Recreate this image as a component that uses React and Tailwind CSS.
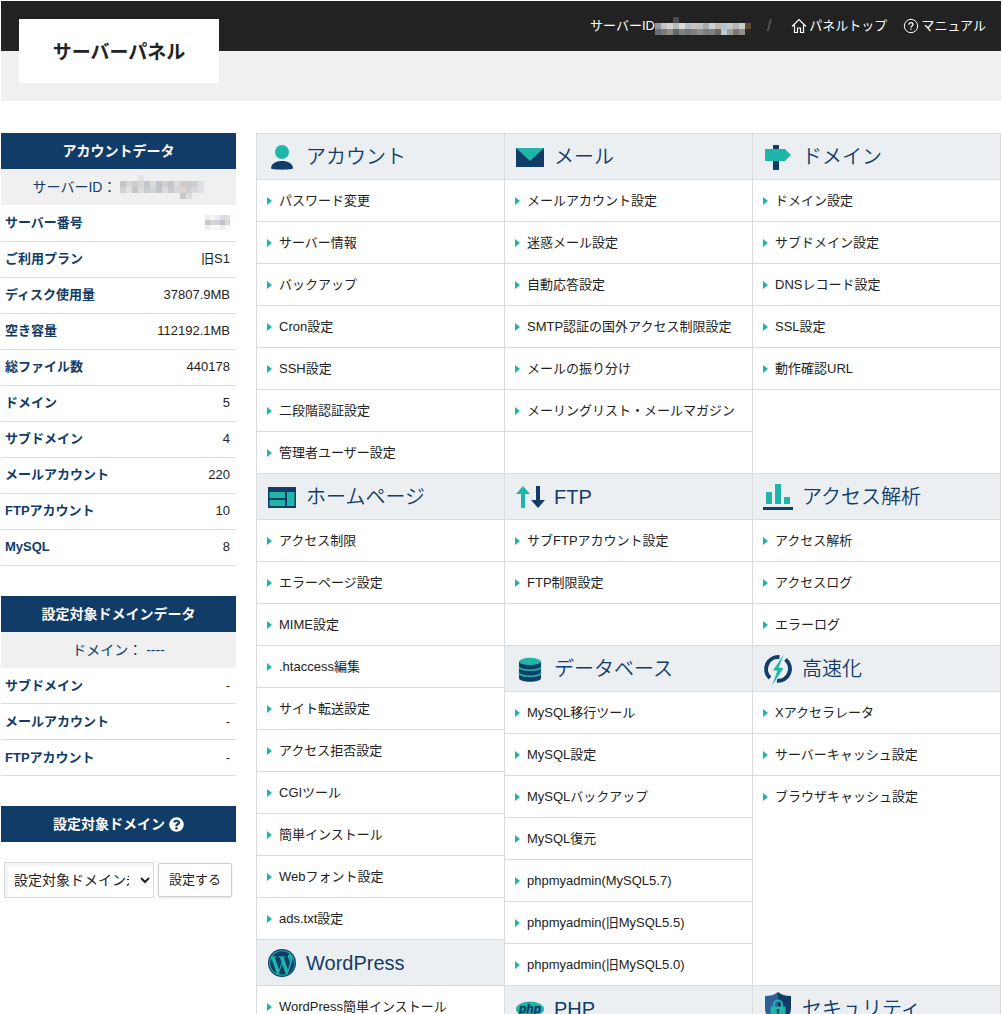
import { FaQuestionCircle } from "react-icons/fa";

const accountData = [
  ["サーバー番号", null],
  ["ご利用プラン", "旧S1"],
  ["ディスク使用量", "37807.9MB"],
  ["空き容量", "112192.1MB"],
  ["総ファイル数", "440178"],
  ["ドメイン", "5"],
  ["サブドメイン", "4"],
  ["メールアカウント", "220"],
  ["FTPアカウント", "10"],
  ["MySQL", "8"],
];

const domainData = [
  ["サブドメイン", "-"],
  ["メールアカウント", "-"],
  ["FTPアカウント", "-"],
];

const NAVY = "#113c68";
const TEAL = "#1fb5a9";

function Icon({ children }) {
  return (
    <svg className="h-7 w-7 shrink-0 overflow-visible" viewBox="0 0 28 28" aria-hidden="true">
      {children}
    </svg>
  );
}

const icons = {
  account: (
    <Icon>
      <circle cx="14" cy="9" r="7" fill={TEAL} />
      <path d="M3 25.500C3 20.500 8 18 14 18s11 2.500 11 7.500c-3 1.500-19 1.500-22 0z" fill={NAVY} />
    </Icon>
  ),
  mail: (
    <Icon>
      <path d="M0 5h28v19H0z" fill={NAVY} />
      <path d="M0 5h28L14 18z" fill={TEAL} />
    </Icon>
  ),
  domain: (
    <Icon>
      <path d="M9 2h6v25H9z" fill={NAVY} />
      <path d="M1 6h20l6 6-6 6H1z" fill={TEAL} />
    </Icon>
  ),
  homepage: (
    <Icon>
      <path d="M0 4h28v21H0z" fill={NAVY} />
      <path d="M1.500 9H17v6H1.500zM1.500 17H17v6H1.500zM19 9h7.500v14H19z" fill={TEAL} />
    </Icon>
  ),
  ftp: (
    <Icon>
      <path d="M7 3l7 8H9v14H5V11H0z" fill={TEAL} />
      <path d="M22 25l-7-8h5V3h4v14h5z" fill={NAVY} />
    </Icon>
  ),
  analysis: (
    <Icon>
      <path d="M2 9h6v12H2zM11 1h6v20h-6zM20 14h6v7h-6z" fill={TEAL} />
      <path d="M-1 24h30v3H-1z" fill={NAVY} />
    </Icon>
  ),
  database: (
    <Icon>
      <path d="M3 7v16c0 5 22 5 22 0V7z" fill={NAVY} />
      <path d="M3 11.500c0 5 22 5 22 0M3 17.500c0 5 22 5 22 0" fill="none" stroke={TEAL} strokeWidth="1.500" />
      <ellipse cx="14" cy="6.500" rx="11" ry="3.700" fill={TEAL} />
    </Icon>
  ),
  speed: (
    <Icon>
      <path d="M15.500 2.200A12 12 0 0 0 6 23" fill="none" stroke={NAVY} strokeWidth="4" />
      <path d="M21.500 4.500A12 12 0 0 1 13 25.800" fill="none" stroke={NAVY} strokeWidth="4" />
      <path
        d="M19.500 0L9 15.500h4.500L8 30.500 19.500 13h-5z"
        fill={TEAL}
        stroke="#eceff2"
        strokeWidth="2"
        paintOrder="stroke"
      />
    </Icon>
  ),
  wordpress: (
    <Icon>
      <circle cx="14" cy="14" r="14" fill={NAVY} />
      <circle cx="14" cy="14" r="12.800" fill={TEAL} />
      <g transform="scale(.875)" fill={NAVY}>
        <path d="M2.600 16c0 5.300 3.100 9.900 7.600 12.100L3.800 10.500C3 12.200 2.600 14 2.600 16zM25 15.300c0-1.700-.6-2.800-1.100-3.700-.7-1.100-1.300-2.100-1.300-3.200 0-1.300 1-2.400 2.300-2.400h.2A13.400 13.400 0 0 0 4.800 8.600h.9c1.400 0 3.600-.2 3.600-.2.700 0 .8 1 .1 1.100 0 0-.7.100-1.500.1l4.800 14.200 2.900-8.600-2-5.600c-.7 0-1.400-.1-1.400-.1-.7 0-.6-1.100.1-1.100 0 0 2.200.2 3.500.2 1.400 0 3.600-.2 3.600-.2.700 0 .8 1 .1 1.100 0 0-.7.100-1.500.1l4.700 14.100 1.300-4.300c.6-1.800 1-3.100 1-4.100zM16.200 17.200l-4 11.500c2.900.9 5.700.8 8.200-.1l-.1-.2zM27.600 9.600c.5 3.300-.4 5.500-1 7.400l-4 11.600A13.400 13.400 0 0 0 27.600 9.600z" />
      </g>
    </Icon>
  ),
  php: (
    <Icon>
      <ellipse cx="14" cy="14" rx="14" ry="7.500" fill={TEAL} />
      <text
        x="14"
        y="17.500"
        textAnchor="middle"
        fontFamily="Liberation Sans, sans-serif"
        fontWeight="700"
        fontStyle="italic"
        fontSize="12"
        fill={NAVY}
        stroke={NAVY}
        strokeWidth=".4"
      >
        php
      </text>
    </Icon>
  ),
  security: (
    <Icon>
      <path d="M14-3C10 0 6 1 1 1v12c0 8 6 13 13 17z" fill="#2c6094" />
      <path d="M14-3c4 3 8 4 13 4v12c0 8-6 13-13 17z" fill={NAVY} />
      <path d="M10 12V9.500a4 4 0 0 1 8 0V12" fill="none" stroke={TEAL} strokeWidth="2" />
      <path d="M6.500 11.500h15V23h-15z" fill={TEAL} />
      <path d="M14 14a1.500 1.500 0 0 1 .8 2.800V19h-1.600v-2.200A1.500 1.500 0 0 1 14 14z" fill={NAVY} />
    </Icon>
  ),
};

// pad leaves room for the rows that a neighbouring panel has and this one lacks
const columns = [
  [
    {
      icon: "account",
      title: "アカウント",
      items: ["パスワード変更", "サーバー情報", "バックアップ", "Cron設定", "SSH設定", "二段階認証設定", "管理者ユーザー設定"],
    },
    {
      icon: "homepage",
      title: "ホームページ",
      items: [
        "アクセス制限",
        "エラーページ設定",
        "MIME設定",
        ".htaccess編集",
        "サイト転送設定",
        "アクセス拒否設定",
        "CGIツール",
        "簡単インストール",
        "Webフォント設定",
        "ads.txt設定",
      ],
    },
    { icon: "wordpress", title: "WordPress", items: ["WordPress簡単インストール"] },
  ],
  [
    {
      icon: "mail",
      title: "メール",
      pad: "border-b pb-[41px]",
      items: [
        "メールアカウント設定",
        "迷惑メール設定",
        "自動応答設定",
        "SMTP認証の国外アクセス制限設定",
        "メールの振り分け",
        "メーリングリスト・メールマガジン",
      ],
    },
    { icon: "ftp", title: "FTP", pad: "border-b pb-[41px]", items: ["サブFTPアカウント設定", "FTP制限設定"] },
    {
      icon: "database",
      title: "データベース",
      items: [
        "MySQL移行ツール",
        "MySQL設定",
        "MySQLバックアップ",
        "MySQL復元",
        "phpmyadmin(MySQL5.7)",
        "phpmyadmin(旧MySQL5.5)",
        "phpmyadmin(旧MySQL5.0)",
      ],
    },
    { icon: "php", title: "PHP", items: [] },
  ],
  [
    {
      icon: "domain",
      title: "ドメイン",
      pad: "border-b pb-[83px]",
      items: ["ドメイン設定", "サブドメイン設定", "DNSレコード設定", "SSL設定", "動作確認URL"],
    },
    { icon: "analysis", title: "アクセス解析", items: ["アクセス解析", "アクセスログ", "エラーログ"] },
    {
      icon: "speed",
      title: "高速化",
      pad: "border-b pb-[167px]",
      open: true,
      items: ["Xアクセラレータ", "サーバーキャッシュ設定", "ブラウザキャッシュ設定"],
    },
    { icon: "security", title: "セキュリティ", items: [] },
  ],
];

// masked value, each cell is one block of the mosaic
function Mosaic({ rows, size }) {
  return (
    <svg
      width={rows[0].length * size}
      height={rows.length * size}
      shapeRendering="crispEdges"
      role="img"
      aria-label="非表示"
    >
      {rows.map((row, y) =>
        row.map((fill, x) => (
          <rect key={`${x}-${y}`} x={x * size} y={y * size} width={size} height={size} fill={fill} />
        ))
      )}
    </svg>
  );
}

const n = "none";
const topMask = [
  [n, n, n, "#4d4d4d", n, n, n, n, n, n, n, n, n, n, n, n],
  ["#8f97a3", "#c3c4c8", "#d9d2ca", "#b0bcc4", "#dedad2", "#bbbcc2", "#c9c4bf", "#c0c1c6", "#a9aaae", "#cdd0d2", "#c4b8ae", "#b5c2cd", "#c9c5c1", "#b3b4ba", "#cbcbc8", "#5e4a33"],
  ["#687078", "#7e7a76", "#8d8e8a", "#636464", "#7a8084", "#74777c", "#7f7f80", "#8b8f92", "#7c7d7f", "#7e8285", "#6f675f", "#b9c7d3", "#9da09f", "#7f766b", "#8d908f", "#2a2624"],
];
const sideMask = [
  [n, n, n, "#e4e4e4", n, n, n, n, n, n, n, n, n, n],
  ["#c4c5c9", "#dad6d5", "#cbcdd1", "#d5d5d6", "#c1c6ce", "#d9dadb", "#c2c3c9", "#d2cecf", "#c4c6cc", "#dcdcdd", "#d3cbc8", "#c8cace", "#cfcfd3", "#dfe2e5"],
  ["#cfd1d5", "#dfe0e2", "#c9c5c6", "#dddedf", "#c9ccd3", "#d2d2d4", "#bfc3cb", "#dcdad8", "#c8cbd1", "#d6d6d8", "#ddd3cf", "#cdced2", "#dadadc", "#dfe2e5"],
  [n, n, n, n, n, n, n, n, n, n, "#c8cacc", "#dcdcdd", n, n],
];
const numberMask = [
  ["#ededed", "#f6f6f6", "#ececec", "#dcdcdf", "#e5dedc"],
  ["#c8c8c9", "#d4d4d5", "#d2d2d5", "#bcc1cf", "#e2d7d5"],
  ["#ededed", "#f8f8f8", "#f8f8f8", "#ededee", "#f8f8f8"],
];

function SideHeading({ children }) {
  return (
    <h2 className="flex h-9 items-center justify-center gap-1 bg-[#113c68] text-sm font-bold text-white">
      {children}
    </h2>
  );
}

function SideCaption({ children }) {
  return (
    <p className="flex h-9 items-center justify-center gap-1 bg-[#f0f0f0] text-sm text-[#113c68]">
      {children}
    </p>
  );
}

function DataTable({ rows }) {
  return (
    <table className="w-full text-[13px]">
      <tbody>
        {rows.map(([label, value]) => (
          <tr key={label} className="h-9 border-b border-[#d9dbdd]">
            <th scope="row" className="pl-1 text-left font-bold text-[#113c68]">
              {label}
            </th>
            <td className="pr-[6px] text-right">
              {value ?? (
                <span className="flex justify-end">
                  <Mosaic rows={numberMask} size={5} />
                </span>
              )}
            </td>
          </tr>
        ))}
      </tbody>
    </table>
  );
}

function Panel({ icon, title, items, pad = "", open }) {
  return (
    <section className={`border-r border-[#d9dbdd] ${pad}`}>
      <h2 className="flex h-[46px] items-center gap-[10px] border-b border-[#d9dbdd] bg-[#eceff2] pl-[11px] text-[20px] font-[350] text-[#113c68]">
        {icons[icon]}
        {title}
      </h2>
      <ul className={open ? "[&>li:last-child]:border-transparent" : ""}>
        {items.map((item) => (
          <li key={item} className="h-[42px] border-b border-[#d9dbdd]">
            <a href="#" className="flex h-full items-center gap-[7px] pl-[10px] text-[13px] whitespace-nowrap">
              <svg className="h-2 w-[5px] shrink-0" viewBox="0 0 5 8" aria-hidden="true">
                <path d="M0 0l5 4-5 4z" fill={TEAL} />
              </svg>
              {item}
            </a>
          </li>
        ))}
      </ul>
    </section>
  );
}

export default function App() {
  return (
    <div className="h-screen overflow-hidden bg-white p-px font-['Liberation_Sans','Noto_Sans_CJK_JP',sans-serif] font-normal text-[#222]">
      <header className="bg-[#f0f0f0]">
        <div className="flex h-[50px] items-start justify-between bg-[#222] pr-[15px] pl-[18px]">
          <h1 className="mt-[18px] flex h-16 w-[200px] shrink-0 items-center justify-center bg-white pt-1 text-[19px] font-bold">
            サーバーパネル
          </h1>
          <nav className="flex h-full items-center text-[13px] text-white">
            <span>サーバーID</span>
            <Mosaic rows={topMask} size={6} />
            <span className="mr-5 ml-4 text-base text-[#666]">/</span>
            <a href="#" className="flex items-center gap-[2px]">
              <svg className="h-4 w-4" viewBox="0 0 16 16" fill="none" stroke="currentColor" aria-hidden="true">
                <path d="M1 8.500L8 1.500l7 7M3.500 7v7.500h3V10h3v4.500h3V7" strokeWidth="1.200" />
              </svg>
              パネルトップ
            </a>
            <a href="#" className="ml-4 flex items-center gap-[2px]">
              <svg className="h-4 w-4" viewBox="0 0 16 16" fill="none" stroke="currentColor" aria-hidden="true">
                <circle cx="8" cy="8" r="6.700" />
                <path d="M6 6.700c0-2.700 4-2.700 4-.2 0 1.500-2 1.500-2 3M8 10.500v1.300" strokeWidth="1.300" />
              </svg>
              マニュアル
            </a>
          </nav>
        </div>
        <div className="h-[50px]" />
      </header>

      <div className="mt-8 flex items-start gap-5">
        <aside className="flex w-[235px] shrink-0 flex-col gap-[30px]">
          <section>
            <SideHeading>アカウントデータ</SideHeading>
            <SideCaption>
              サーバーID：
              <Mosaic rows={sideMask} size={6} />
            </SideCaption>
            <DataTable rows={accountData} />
          </section>
          <section>
            <SideHeading>設定対象ドメインデータ</SideHeading>
            <SideCaption>
              ドメイン：
              <span>----</span>
            </SideCaption>
            <DataTable rows={domainData} />
          </section>
          <section>
            <SideHeading>
              <label htmlFor="target-domain">設定対象ドメイン</label>
              <FaQuestionCircle className="h-[15px] w-[15px]" />
            </SideHeading>
            <form className="mt-5 flex items-center gap-1 pl-[3px]" onSubmit={(e) => e.preventDefault()}>
              <select
                id="target-domain"
                className="h-9 w-[150px] border border-[#d9dbdd] bg-white pr-2 pl-[5px] text-sm shadow-[inset_3px_3px_0_#f5f5f5]"
              >
                <option>設定対象ドメイン未指定</option>
              </select>
              <button
                type="submit"
                className="h-[34px] w-[74px] rounded-xs border border-[#ccc] bg-white text-[13px] shadow-sm"
              >
                設定する
              </button>
            </form>
          </section>
        </aside>

        <main className="grid min-w-0 flex-1 grid-cols-3 border-t border-l border-[#d9dbdd]">
          {columns.map((panels, i) => (
            <div key={i}>
              {panels.map((panel) => (
                <Panel key={panel.title} {...panel} />
              ))}
            </div>
          ))}
        </main>
      </div>
    </div>
  );
}
